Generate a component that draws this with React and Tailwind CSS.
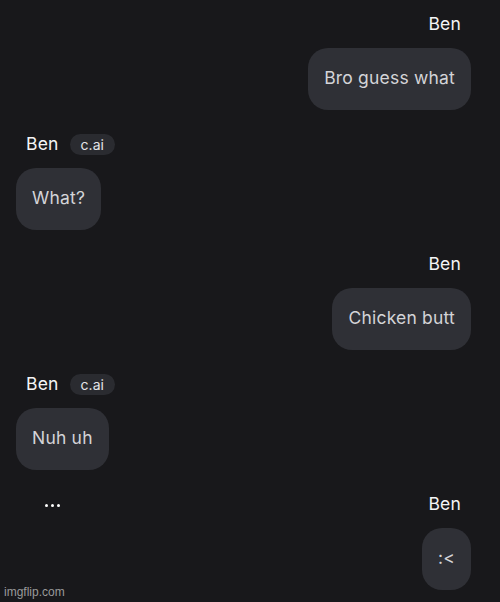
const messages = [
    { id: 1, mine: true, text: 'Bro guess what' },
    { id: 2, mine: false, text: 'What?' },
    { id: 3, mine: true, text: 'Chicken butt' },
    { id: 4, mine: false, text: 'Nuh uh' },
    { id: 5, mine: true, text: ':<', typing: true },
]

const Message = ({ msg }) => {
    let rowClass = 'justify-start pl-[10px]'
    if (msg.typing) rowClass = 'justify-between pr-[10px]'
    else if (msg.mine) rowClass = 'justify-end pr-[10px]'

    return (
        <div className={`flex flex-col mb-[21px] ${msg.mine ? 'items-end' : 'items-start'}`}>
            <div className={`flex h-6 mt-px items-center w-full ${rowClass}`}>
                {msg.typing && (
                    <div className="flex items-center gap-[3px] pl-[29px] pt-[2px]">
                        <span className="w-[3px] h-[3px] rounded-full bg-white" />
                        <span className="w-[3px] h-[3px] rounded-full bg-white" />
                        <span className="w-[3px] h-[3px] rounded-full bg-white" />
                    </div>
                )}
                <span className="text-[17.5px] text-[#f4f4f5] tracking-[0.2px]">Ben</span>
                {!msg.mine && (
                    <span className="ml-[11px] h-[21px] px-[11px] rounded-full bg-[#2a2b30] text-[14px] text-[#e4e4e7] flex items-center">
                        c.ai
                    </span>
                )}
            </div>
            <div className="mt-[12px] h-[62px] px-4 pb-[2px] rounded-[20px] bg-[#2f3036] flex items-center text-[17.5px] text-[#d4d4d8] tracking-[0.2px]">
                {msg.text}
            </div>
        </div>
    )
}

export default function App() {
    return (
        <div className="relative w-[500px] h-[602px] bg-[#18181b] overflow-hidden" style={{ fontFamily: 'Inter, "Noto Sans", sans-serif' }}>
            <div className="flex flex-col pt-[11px] pl-4 pr-[29px]">
                {messages.map((m) => (
                    <Message key={m.id} msg={m} />
                ))}
            </div>
            <span className="absolute left-[4px] bottom-[1px] text-[12px] text-[#9a9a9a]" style={{ fontFamily: 'Arial, "Liberation Sans", sans-serif' }}>
                imgflip.com
            </span>
        </div>
    )
}
